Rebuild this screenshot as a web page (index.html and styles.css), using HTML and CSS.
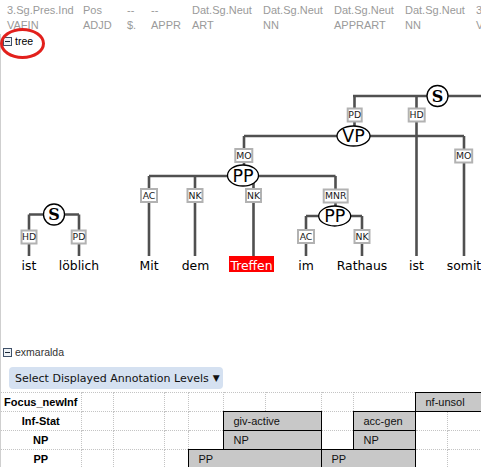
FILE: index.html
```html
<!DOCTYPE html>
<html>
<head>
<meta charset="utf-8">
<link rel="stylesheet" href="styles.css">
</head>
<body>
<div class="morph">
  <span>3.Sg.Pres.Ind</span><span>Pos</span><span>--</span><span>--</span><span>Dat.Sg.Neut</span><span>Dat.Sg.Neut</span><span>Dat.Sg.Neut</span><span>Dat.Sg.Neut</span><span>3.Sg.Pres.Ind</span>
  <span>VAFIN</span><span>ADJD</span><span>$.</span><span>APPR</span><span>ART</span><span>NN</span><span>APPRART</span><span>NN</span><span>VVFIN</span>
</div>
<div class="mark"></div>
<div class="panel">
  <div class="toggle">
    <svg class="minus" width="9" height="9" viewBox="0 0 9 9"><rect x="0.5" y="0.5" width="8" height="8" fill="#eef2f6" stroke="#3f5068"/><path d="M2 4.5H7" stroke="#1c2838" stroke-width="1"/></svg>
    <span class="tlabel">tree</span>
  </div>
  <svg class="tree" width="480" height="297" viewBox="1 48 480 297">
    <path class="edges" d="M353 96H481M354.5 96V136M416.5 96V256M244 136H464M244 136V176M464 136V256M149 176H335.5M149 176V256M195 176V256M253.5 176V256M335.5 176V216M306 216H362M306 216V256M362 216V256M29 214.5H79M29 214.5V256M79 214.5V256"/>
    <g class="lbl">
      <rect x="347.7" y="108.5" width="14" height="13"/><text x="354.7" y="118.3">PD</text>
      <rect x="408.7" y="108.5" width="16" height="13"/><text x="416.7" y="118.3">HD</text>
      <rect x="235.3" y="149" width="17" height="13"/><text x="243.8" y="158.8">MO</text>
      <rect x="455.2" y="149.5" width="17" height="13"/><text x="463.7" y="159.3">MO</text>
      <rect x="141" y="189" width="16" height="13"/><text x="149" y="198.8">AC</text>
      <rect x="187.5" y="189" width="15" height="13"/><text x="195" y="198.8">NK</text>
      <rect x="246" y="189" width="15" height="13"/><text x="253.5" y="198.8">NK</text>
      <rect x="323.7" y="189.5" width="24" height="13"/><text x="335.7" y="199.3">MNR</text>
      <rect x="298" y="230" width="16" height="13"/><text x="306" y="239.8">AC</text>
      <rect x="354.5" y="230" width="15" height="13"/><text x="362" y="239.8">NK</text>
      <rect x="21.5" y="230.5" width="15" height="13"/><text x="29" y="240.3">HD</text>
      <rect x="71.7" y="230.5" width="14" height="13"/><text x="79" y="240.3">PD</text>
    </g>
    <g class="node">
      <circle cx="437.5" cy="96" r="10.5"/><text class="s" x="437.5" y="101.8">S</text>
      <ellipse cx="353.5" cy="136" rx="16.5" ry="10"/><text x="353.5" y="142.2">VP</text>
      <ellipse cx="243" cy="175.5" rx="15.5" ry="10.5"/><text x="243" y="181.7">PP</text>
      <ellipse cx="334.7" cy="216" rx="16" ry="10"/><text x="334.7" y="222.2">PP</text>
      <circle cx="54" cy="214.5" r="10.5"/><text class="s" x="54" y="220.3">S</text>
    </g>
    <rect class="hit" x="229" y="256" width="45" height="16"/>
    <g class="word">
      <text x="29" y="270">ist</text>
      <text x="79" y="270">löblich</text>
      <text x="149" y="270">Mit</text>
      <text x="195.5" y="270">dem</text>
      <text class="hit-t" x="251.5" y="270">Treffen</text>
      <text x="306" y="270">im</text>
      <text x="362" y="270">Rathaus</text>
      <text x="416.5" y="270">ist</text>
      <text x="464" y="270">somit</text>
    </g>
  </svg>
  <div class="toggle exm">
    <svg class="minus" width="9" height="9" viewBox="0 0 9 9"><rect x="0.5" y="0.5" width="8" height="8" fill="#eef2f6" stroke="#3f5068"/><path d="M2 4.5H7" stroke="#1c2838" stroke-width="1"/></svg>
    <span class="tlabel">exmaralda</span>
  </div>
  <button class="levels">Select Displayed Annotation Levels <span class="arrow">▼</span></button>
  <table class="grid">
    <colgroup>
      <col class="c-head"><col style="width:32px"><col style="width:51px"><col style="width:24px"><col style="width:35px"><col style="width:42px"><col style="width:56px"><col style="width:32px"><col style="width:62px"><col style="width:32px"><col style="width:60px">
    </colgroup>
    <tr><th>Focus_newInf</th><td></td><td></td><td></td><td></td><td></td><td></td><td></td><td></td><td class="ann" colspan="2">nf-unsol</td></tr>
    <tr><th>Inf-Stat</th><td></td><td></td><td></td><td></td><td class="ann" colspan="2">giv-active</td><td></td><td class="ann">acc-gen</td><td></td><td></td></tr>
    <tr><th>NP</th><td></td><td></td><td></td><td></td><td class="ann" colspan="2">NP</td><td></td><td class="ann">NP</td><td></td><td></td></tr>
    <tr><th>PP</th><td></td><td></td><td></td><td class="ann" colspan="3">PP</td><td class="ann" colspan="2">PP</td><td></td><td></td></tr>
  </table>
</div>
</body>
</html>
```

FILE: styles.css
```css
html, body {
  margin: 0;
  padding: 0;
  overflow: hidden;
  background: #fff;
}
body {
  position: relative;
  width: 481px;
  height: 467px;
  font-family: "Liberation Sans", Arial, sans-serif;
}
.morph {
  display: grid;
  grid-template-columns: 76px 44px 24px 41px 71px 71px 71px 71px 80px;
  padding: 3px 0 0 7px;
  font-size: 11px;
  line-height: 14.5px;
  color: #9a9a9a;
  white-space: nowrap;
  width: 600px;
}
.mark {
  position: absolute;
  left: 0;
  top: 28px;
  width: 45px;
  height: 31px;
  box-sizing: border-box;
  border: 3px solid #e2201c;
  border-radius: 50%;
}
.panel {
  border-left: 1px solid #cfcfcf;
  width: 480px;
}
.toggle {
  display: flex;
  align-items: center;
  gap: 3px;
  height: 14px;
  margin-top: 2px;
  padding-left: 2px;
  font-size: 10.5px;
  line-height: 14px;
  color: #000;
}
.toggle .minus {
  display: block;
}
.exm {
  margin-top: 0;
  color: #333;
}
.tree {
  display: block;
}
.edges {
  fill: none;
  stroke: #505050;
  stroke-width: 2.6;
}
.lbl rect {
  fill: #fff;
  stroke: #b2b2b2;
  stroke-width: 2;
}
.lbl text {
  font-family: "DejaVu Sans", sans-serif;
  font-size: 9.3px;
  fill: #1a1a1a;
  text-anchor: middle;
}
.node circle, .node ellipse {
  fill: #fff;
  stroke: #000;
  stroke-width: 1.3;
}
.node text {
  font-family: "DejaVu Sans", sans-serif;
  font-size: 17.5px;
  fill: #000;
  text-anchor: middle;
}
.node text.s {
  font-family: "DejaVu Serif", serif;
  font-weight: bold;
  font-size: 16px;
}
.word text {
  font-family: "DejaVu Sans", sans-serif;
  font-size: 12.4px;
  fill: #000;
  text-anchor: middle;
}
.hit {
  fill: #ff0000;
}
.word text.hit-t {
  fill: #fff;
}
.levels {
  display: flex;
  align-items: center;
  gap: 4px;
  margin: 8px 0 0 8px;
  width: 214px;
  height: 22px;
  padding: 0 0 0 6px;
  border: none;
  border-radius: 4px;
  background: #d5e1f1;
  font-family: "DejaVu Sans", sans-serif;
  font-size: 11px;
  color: #111;
  white-space: nowrap;
}
.levels .arrow {
  font-size: 9px;
}
.grid {
  margin-top: 3px;
  border-collapse: collapse;
  table-layout: fixed;
  width: 506px;
  font-size: 11px;
}
.grid .c-head {
  width: 80px;
}
.grid tr {
  height: 19px;
}
.grid th, .grid td {
  padding: 0;
  height: 18px;
  border: 1px dotted #c4c4c4;
  white-space: nowrap;
  overflow: hidden;
}
.grid th {
  border-left: none;
  font-weight: bold;
  text-align: center;
  color: #000;
}
.grid td.ann {
  background: #c8c8c8;
  border: 1px solid #000;
  padding-left: 10px;
  color: #111;
}
```
